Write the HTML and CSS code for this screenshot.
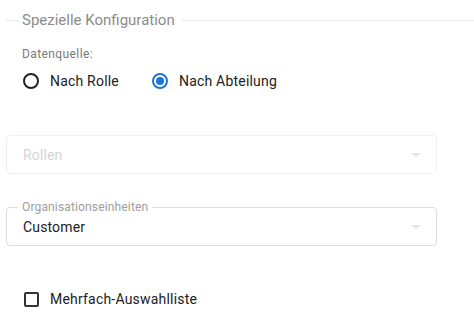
FILE: index.html
```html
<html>
	<head>
		<title>Spezielle Konfiguration</title>
		<link rel="stylesheet" href="styles.css">
	</head>
	<body>
		<fieldset class="config">
			<legend>Spezielle Konfiguration</legend>
			<div class="label">Datenquelle:</div>
			<div class="radios">
				<label class="radio"><span class="dot"></span>Nach Rolle</label>
				<label class="radio checked"><span class="dot"></span>Nach Abteilung</label>
			</div>
			<div class="select disabled">
				<span class="value">Rollen</span>
				<span class="arrow"></span>
			</div>
			<div class="select outlined">
				<span class="float">Organisationseinheiten</span>
				<span class="value">Customer</span>
				<span class="arrow"></span>
			</div>
			<label class="check"><span class="box"></span>Mehrfach-Auswahlliste</label>
		</fieldset>
	</body>
</html>
```

FILE: styles.css
```css
body
{
	margin:0;
	font-family:Roboto, "Liberation Sans", sans-serif;
	color:#212121;
	background:white;
}
.config
{
	margin:11px 0 0 6px;
	padding:0 0 0 16px;
	border:none;
	border-top:1px solid #e8e8ec;
}
.config > legend
{
	margin-left:-3px;
	padding:0 6px 0 3px;
	font-size:15px;
	color:#8c8c8c;
}
.label
{
	margin-top:18px;
	font-size:12px;
	color:#7a7a7a;
	letter-spacing:0.4px;
}
.radios
{
	display:flex;
	gap:32px;
	margin-top:12px;
	font-size:14px;
	letter-spacing:0.2px;
}
.radio
{
	display:flex;
	align-items:center;
	gap:11px;
}
.dot
{
	width:12px;
	height:12px;
	border:2px solid #222;
	border-radius:50%;
	margin-left:1px;
	position:relative;
}
.checked .dot
{
	border-color:#1976d2;
}
.checked .dot::after
{
	content:"";
	position:absolute;
	left:2px;
	top:2px;
	width:8px;
	height:8px;
	border-radius:50%;
	background:#1976d2;
}
.select
{
	position:relative;
	display:flex;
	align-items:center;
	justify-content:space-between;
	width:431px;
	height:39px;
	box-sizing:border-box;
	margin-left:-16px;
	padding:0 15px 0 16px;
	border:1px solid #f0f0f2;
	border-radius:4px;
	font-size:14px;
	letter-spacing:0.15px;
}
.disabled
{
	margin-top:46px;
	color:#d4d4d4;
}
.outlined
{
	margin-top:33px;
	border-color:#dcdce2;
}
.float
{
	position:absolute;
	left:11px;
	top:-8px;
	padding:0 4px;
	background:white;
	font-size:12px;
	line-height:14px;
	color:#9e9e9e;
}
.outlined .value
{
	color:#222;
}
.arrow
{
	width:0;
	height:0;
	border-left:5px solid transparent;
	border-right:5px solid transparent;
	border-top:4px solid #e4e4e8;
}
.check
{
	display:flex;
	align-items:center;
	gap:11px;
	margin-top:45px;
	font-size:14px;
	letter-spacing:0.2px;
}
.box
{
	width:11px;
	height:11px;
	margin-left:2px;
	border:2px solid #333;
	border-radius:2px;
}
```
